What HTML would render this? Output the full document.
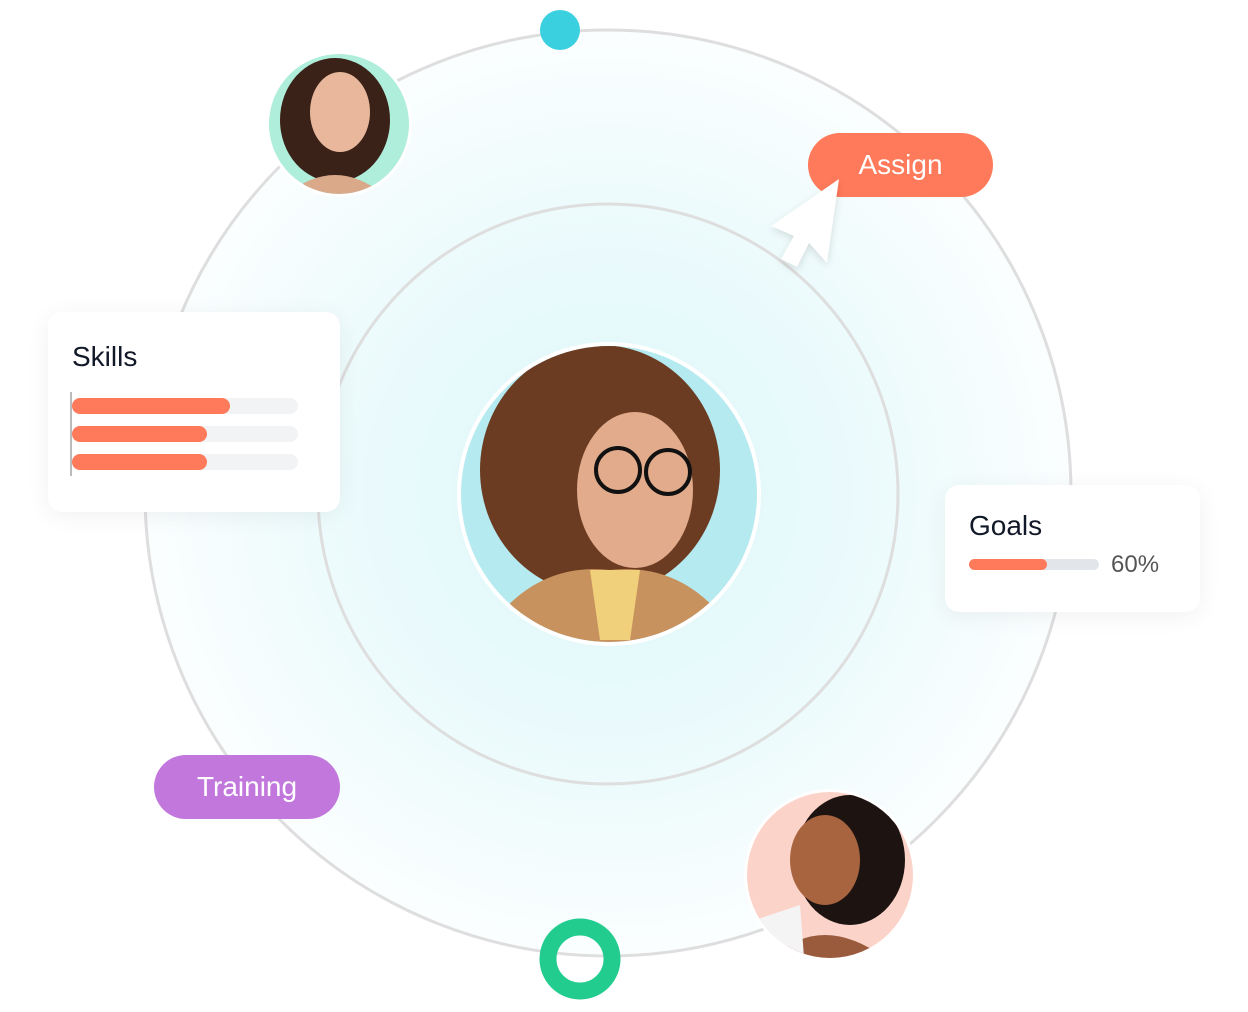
<!DOCTYPE html>
<html><head><meta charset="utf-8"><style>
html,body{margin:0;padding:0;background:#fff;}
body{width:1248px;height:1012px;position:relative;overflow:hidden;font-family:"Liberation Sans",sans-serif;}
.abs{position:absolute;}
.card{position:absolute;background:#fff;border-radius:14px;box-shadow:0 4px 24px rgba(0,0,0,0.06);}
.pill{position:absolute;border-radius:32px;color:#fff;font-size:28px;display:flex;align-items:center;justify-content:center;}
</style></head><body>
<svg class="abs" style="left:0;top:0" width="1248" height="1012">
<defs>
<radialGradient id="g" cx="50%" cy="50%" r="50%">
<stop offset="0" stop-color="#dcf7fa"/><stop offset="0.65" stop-color="#eefbfc"/><stop offset="1" stop-color="#fbfeff"/>
</radialGradient>
</defs>
<circle cx="608" cy="493" r="463" fill="url(#g)" stroke="#dedede" stroke-width="3"/>
<circle cx="608" cy="494" r="290" fill="none" stroke="#dedede" stroke-width="3"/>
<circle cx="560" cy="30" r="20" fill="#3ad0e0"/>
<circle cx="580" cy="959" r="32" fill="none" stroke="#22cc8f" stroke-width="17"/>
<circle cx="609" cy="494" r="152" fill="#fff"/>
<circle cx="609" cy="494" r="148" fill="#b5eaf0"/>
<clipPath id="c1"><circle cx="609" cy="494" r="148"/></clipPath>
<g clip-path="url(#c1)">
<ellipse cx="600" cy="470" rx="120" ry="125" fill="#6b3c22"/>
<path d="M470 660 Q520 560 610 570 Q700 560 750 660 Z" fill="#c8925e"/>
<path d="M590 570 L640 570 L630 640 L600 640 Z" fill="#f0d07a"/>
<ellipse cx="635" cy="490" rx="58" ry="78" fill="#e2ab8c"/>
<circle cx="618" cy="470" r="22" fill="none" stroke="#111" stroke-width="4"/>
<circle cx="668" cy="472" r="22" fill="none" stroke="#111" stroke-width="4"/>
</g>
<circle cx="339" cy="124" r="73" fill="#fff"/>
<circle cx="339" cy="124" r="70" fill="#aeeedb"/>
<clipPath id="c2"><circle cx="339" cy="124" r="70"/></clipPath>
<g clip-path="url(#c2)">
<ellipse cx="335" cy="120" rx="55" ry="62" fill="#3a2218"/>
<path d="M280 200 Q335 150 390 200 Z" fill="#d9a98a"/>
<ellipse cx="340" cy="112" rx="30" ry="40" fill="#e9b89c"/>
</g>
<circle cx="830" cy="875" r="86" fill="#fff"/>
<circle cx="830" cy="875" r="83" fill="#fcd3c9"/>
<clipPath id="c3"><circle cx="830" cy="875" r="83"/></clipPath>
<g clip-path="url(#c3)">
<ellipse cx="850" cy="860" rx="55" ry="65" fill="#1d1412"/>
<path d="M760 970 Q820 900 900 970 Z" fill="#9a5a3c"/>
<ellipse cx="825" cy="860" rx="35" ry="45" fill="#a8643f"/>
<path d="M755 920 L800 905 L805 970 L755 970 Z" fill="#f4f4f4"/>
</g>
</svg>
<div class="pill" style="left:808px;top:133px;width:185px;height:64px;background:#ff7a5a;">Assign</div>
<svg class="abs" style="left:0;top:0" width="1248" height="1012"><polygon points="839,179 771,226 794,236 781,259 797,267 809,243 827,263" fill="#fff" style="filter:drop-shadow(0 3px 4px rgba(0,0,0,0.12))"/></svg>
<div class="pill" style="left:154px;top:755px;width:186px;height:64px;background:#c277dd;">Training</div>
<div class="card" style="left:48px;top:312px;width:292px;height:200px;">
<div class="abs" style="left:24px;top:29px;font-size:28px;color:#111827;">Skills</div>
<div class="abs" style="left:22px;top:80px;width:2px;height:84px;background:#bbb;"></div>
<div class="abs" style="left:24px;top:86px;width:226px;height:16px;border-radius:8px;background:#f2f3f5;"><div style="width:158px;height:16px;border-radius:8px;background:#ff7a5a"></div></div>
<div class="abs" style="left:24px;top:114px;width:226px;height:16px;border-radius:8px;background:#f2f3f5;"><div style="width:135px;height:16px;border-radius:8px;background:#ff7a5a"></div></div>
<div class="abs" style="left:24px;top:142px;width:226px;height:16px;border-radius:8px;background:#f2f3f5;"><div style="width:135px;height:16px;border-radius:8px;background:#ff7a5a"></div></div>
</div>
<div class="card" style="left:945px;top:485px;width:255px;height:127px;">
<div class="abs" style="left:24px;top:25px;font-size:28px;color:#111827;">Goals</div>
<div class="abs" style="left:24px;top:74px;width:130px;height:11px;border-radius:6px;background:#e2e5ea;"><div style="width:78px;height:11px;border-radius:6px;background:#ff7a5a"></div></div>
<div class="abs" style="left:166px;top:66px;font-size:24px;color:#555;">60%</div>
</div>
</body></html>
